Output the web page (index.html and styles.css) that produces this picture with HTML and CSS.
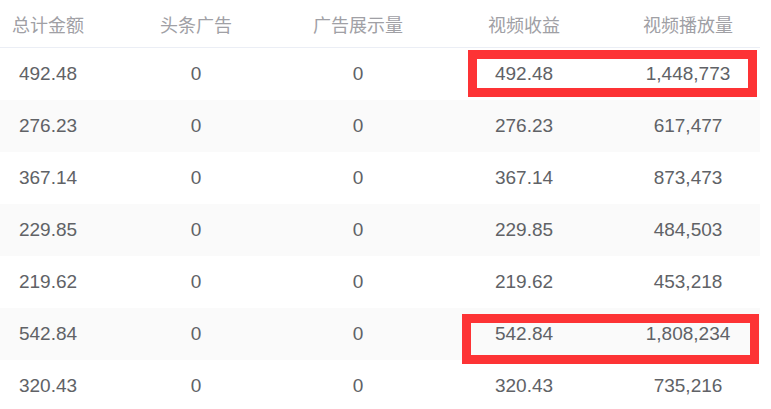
FILE: index.html
```html
<!DOCTYPE html>
<html lang="zh-CN">

<head>
    <meta charset="UTF-8">
    <meta name="viewport" content="width=device-width, initial-scale=1.0">
    <title>收益明细</title>
    <link rel="stylesheet" href="styles.css">
</head>

<body>
    <div class="wrap">
        <table class="income">
            <colgroup>
                <col class="c1">
                <col class="c2">
                <col class="c3">
                <col class="c4">
                <col class="c5">
            </colgroup>
            <thead>
                <tr>
                    <th>总计金额</th>
                    <th>头条广告</th>
                    <th>广告展示量</th>
                    <th>视频收益</th>
                    <th class="last">视频播放量</th>
                </tr>
            </thead>
            <tbody>
                <tr><td>492.48</td><td>0</td><td>0</td><td>492.48</td><td class="last">1,448,773</td></tr>
                <tr><td>276.23</td><td>0</td><td>0</td><td>276.23</td><td class="last">617,477</td></tr>
                <tr><td>367.14</td><td>0</td><td>0</td><td>367.14</td><td class="last">873,473</td></tr>
                <tr><td>229.85</td><td>0</td><td>0</td><td>229.85</td><td class="last">484,503</td></tr>
                <tr><td>219.62</td><td>0</td><td>0</td><td>219.62</td><td class="last">453,218</td></tr>
                <tr><td>542.84</td><td>0</td><td>0</td><td>542.84</td><td class="last">1,808,234</td></tr>
                <tr><td>320.43</td><td>0</td><td>0</td><td>320.43</td><td class="last">735,216</td></tr>
            </tbody>
        </table>

        <!-- 红框标注 -->
        <div class="mark mark-1"></div>
        <div class="mark mark-2"></div>
    </div>
</body>

</html>
```

FILE: styles.css
```css
body {
    margin: 0;
    background: #fff;
    font-family: "Liberation Sans", "Noto Sans CJK SC", sans-serif;
}

.wrap {
    position: relative;
    width: 760px;
    height: 409px;
    overflow: hidden;
}

.income {
    width: 760px;
    border-collapse: collapse;
    table-layout: fixed;
}

.c1 { width: 96px; }
.c2 { width: 200px; }
.c3 { width: 124px; }
.c4 { width: 208px; }
.c5 { width: 132px; }

.income th,
.income td {
    padding: 0;
    text-align: center;
}

.income th {
    height: 47px;
    border-bottom: 1px solid #ebeef5;
    font-size: 18px;
    font-weight: normal;
    color: #a0a0a5;
}

.income td {
    height: 52px;
    font-size: 19px;
    color: #606266;
}

/* 最后一列往左收一点 */
.income .last {
    padding-right: 12px;
}

.income tbody tr:nth-child(even) td {
    background: #fafafa;
}

/* 红框 */
.mark {
    position: absolute;
    border: 9px solid #fd3335;
    box-sizing: border-box;
}
.mark-1 {
    left: 468px;
    top: 50px;
    width: 289px;
    height: 47px;
}
.mark-2 {
    left: 462px;
    top: 314px;
    width: 297px;
    height: 50px;
}
```
